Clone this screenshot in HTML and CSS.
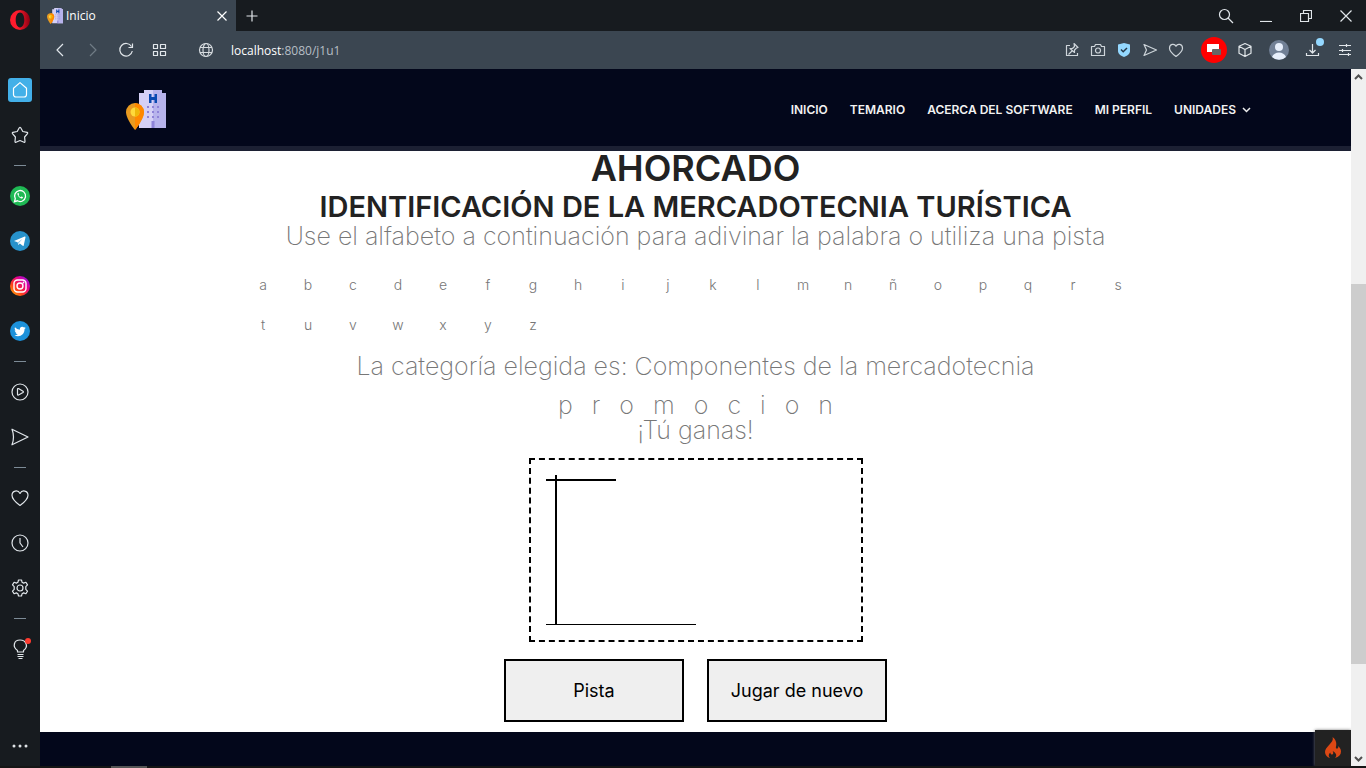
FILE: index.html
```html
<!DOCTYPE html>
<html lang="es">
<head>
<meta charset="utf-8">
<title>Inicio</title>
<link rel="stylesheet" href="styles.css">
</head>
<body>
<svg width="0" height="0" class="defs" aria-hidden="true">
  <defs>
    <linearGradient id="insta" x1="0" y1="1" x2="1" y2="0"><stop offset="0" stop-color="#ffc400"/><stop offset=".35" stop-color="#ff3c1c"/><stop offset=".65" stop-color="#e3008f"/><stop offset="1" stop-color="#7a1cff"/></linearGradient>
    <linearGradient id="opera" x1="0" x2="1"><stop offset=".4" stop-color="#ff1b2d"/><stop offset="1" stop-color="#8c0012"/></linearGradient>
    <symbol id="hotel" viewBox="0 0 40 40">
      <path d="M13 3h5V0h18v3h4v35H13z" fill="#d5d0f6"/>
      <path d="M27 0h9v3h4v35H27z" fill="#b7b3ec"/>
      <path d="M23 4h2.500v3h3V4H31v9h-2.500v-3h-3v3H23z" fill="#0a49b0"/>
      <path d="M21 16h2v2h-2zm5 0h2v2h-2zm5 0h2v2h-2zM21 21h2v2h-2zm5 0h2v2h-2zm5 0h2v2h-2zM21 26h2v2h-2zm5 0h2v2h-2zm5 0h2v2h-2zM25.500 31h3v7h-3z" fill="#8e83d8"/>
      <path d="M9 13a9 9 0 0 0-9 9c0 7 9 18 9 18s9-11 9-18a9 9 0 0 0-9-9z" fill="#e89a20"/>
      <path d="M9 13v27s9-11 9-18a9 9 0 0 0-9-9z" fill="#ff8800"/>
      <circle cx="9" cy="22" r="4.500" fill="#ffd93b"/><path d="M9 17.500a4.500 4.500 0 0 1 0 9z" fill="#efb80b"/>
    </symbol>
  </defs>
</svg>
<div class="window">
  <aside class="sidebar">
    <button class="side opera" aria-label="Opera"><svg width="20" height="20" viewBox="0 0 20 20"><path fill-rule="evenodd" fill="url(#opera)" d="M10 0a10 10 0 1 0 0 20 10 10 0 0 0 0-20zm0 2.600c2.700 0 4.300 3.400 4.300 7.400s-1.600 7.400-4.300 7.400S5.700 14 5.700 10 7.300 2.600 10 2.600z"/></svg></button>
    <button class="side home" aria-label="Página inicial"><svg width="24" height="24" viewBox="0 0 24 24"><path class="line" d="M5.500 10.200 12 4.600l6.500 5.600v6.300a2.500 2.500 0 0 1-2.500 2.500H8a2.500 2.500 0 0 1-2.500-2.500z"/></svg></button>
    <button class="side" aria-label="Marcadores"><svg width="20" height="20" viewBox="0 0 20 20"><path class="line" d="M9.300 2.800q.7-1.100 1.400 0l2.100 3.700 4.300.9q1 .3.400 1.200L14.600 12l.4 4.500q0 1.100-1 .7l-4-1.700-4 1.700q-1 .4-1-.7l.4-4.500-2.900-3.400q-.6-.9.400-1.200l4.300-.9z"/></svg></button>
    <hr class="rule">
    <button class="side" aria-label="WhatsApp"><svg width="20" height="20" viewBox="0 0 20 20"><circle cx="10" cy="10" r="10" fill="#1fb954"/><path d="M4.500 15.700l.8-3a5.500 5.500 0 1 1 2.100 2.100z" fill="none" stroke="#fff" stroke-width="1.300"/><path d="M8 6.800c-1.300.7-.3 2.900.9 4.100s3.400 2.300 4.100.9c.2-.6-1.300-1.400-1.600-1.200l-.6.7c-1-.3-1.800-1-2.300-2l.5-.7c.2-.4-.4-1.900-1-1.800z" fill="#fff"/></svg></button>
    <button class="side" aria-label="Telegram"><svg width="20" height="20" viewBox="0 0 20 20"><circle cx="10" cy="10" r="10" fill="#2792cb"/><path d="M4 10.100 14.700 5.600c.6-.2.900.1.800.7l-1.800 8.100c-.1.600-.6.700-1 .4L9.800 12.600 8.300 14 7.600 11.300z" fill="#fff"/><path d="m8 11.200 4.600-3.400-3.700 4.200-.6 2z" fill="#8dc8e8"/></svg></button>
    <button class="side" aria-label="Instagram"><svg width="20" height="20" viewBox="0 0 20 20"><circle cx="10" cy="10" r="10" fill="url(#insta)"/><rect x="4" y="4" width="12" height="12" rx="3.500" fill="none" stroke="#fff" stroke-width="1.400"/><circle cx="10" cy="10" r="3" fill="none" stroke="#fff" stroke-width="1.400"/><circle cx="13.500" cy="6.500" r=".9" fill="#fff"/></svg></button>
    <button class="side" aria-label="Twitter"><svg width="20" height="20" viewBox="0 0 20 20"><circle cx="10" cy="10" r="10" fill="#1c91da"/><path d="M15.800 6.700l-1.300.5 1-1.300-1.500.6a2.500 2.500 0 0 0-4.200 2.200A6.500 6.500 0 0 1 5 6.300c-.7 1.200-.3 2.500.7 3.200l-1-.3c0 1.200.8 2 1.900 2.400H5.500c.4 1 1.200 1.600 2.300 1.700-1 .8-2.200 1.100-3.500 1 5 2.600 10.400-.4 10.200-6z" fill="#fff"/></svg></button>
    <hr class="rule">
    <button class="side" aria-label="Reproductor"><svg width="20" height="20" viewBox="0 0 20 20"><circle class="line" cx="10" cy="10" r="8"/><path class="line" d="M7.500 7.200q0-1 1-.6l4.500 2.700q.8.600 0 1.200l-4.500 2.500q-1 .3-1-.7z"/></svg></button>
    <button class="side" aria-label="Mi Flow"><svg width="20" height="20" viewBox="0 0 20 20"><path class="line" d="M2 2.200 18 10 2 17.800q3-7.800 0-15.600z"/></svg></button>
    <hr class="rule">
    <button class="side" aria-label="Favoritos"><svg width="20" height="20" viewBox="0 0 20 20"><path class="line" d="M10 17.500C5 13.800 2 10.500 2 7.200 2 2.500 8 1.500 10 5.400 12 1.500 18 2.500 18 7.200c0 3.300-3 6.600-8 10.300z"/></svg></button>
    <button class="side" aria-label="Historial"><svg width="20" height="20" viewBox="0 0 20 20"><circle class="line" cx="10" cy="10" r="8"/><path class="line" d="M10 5v5l3 4"/></svg></button>
    <button class="side" aria-label="Configuración"><svg width="20" height="20" viewBox="0 0 20 20"><path class="line" d="M8.500 2h3l.6 2.300 1.500.8 2.300-.8 1.600 2.600-1.700 1.700v2.800l1.700 1.700-1.600 2.600-2.300-.8-1.500.8-.6 2.300h-3l-.6-2.300-1.500-.8-2.300.8-1.600-2.600 1.700-1.700V8.600L2.500 6.900l1.600-2.600 2.300.8 1.500-.8z"/><circle class="line" cx="10" cy="10" r="3"/></svg></button>
    <hr class="rule">
    <button class="side tips" aria-label="Sugerencias"><svg width="20" height="24" viewBox="0 0 20 24"><path class="line" d="M7.500 15v-1.500C2 9.500 4 3 10 3s9 6.500 3.500 10.500V15zM7.500 17.500h6M7.500 19.500h6M8.500 21.500h4"/><circle cx="18" cy="4" r="3" fill="#ff3b30"/></svg></button>
    <button class="side more" aria-label="Más"><svg width="20" height="20" viewBox="0 0 20 20" fill="#dfe3e6"><circle cx="4" cy="10" r="1.500"/><circle cx="10" cy="10" r="1.500"/><circle cx="16" cy="10" r="1.500"/></svg></button>
  </aside>

  <div class="browser">
    <div class="tabs">
      <div class="tab"><svg width="16" height="16"><use href="#hotel"/></svg><span class="tab-title">Inicio</span><button aria-label="Cerrar pestaña"><svg width="12" height="12" viewBox="0 0 12 12"><path class="line" d="m1.500 1.500 9 9m0-9-9 9"/></svg></button></div>
      <button class="new-tab" aria-label="Nueva pestaña"><svg width="12" height="12" viewBox="0 0 12 12"><path class="line" d="M6 .5v11M.5 6h11"/></svg></button>
      <div class="controls">
        <button aria-label="Buscar"><svg width="16" height="16" viewBox="0 0 16 16"><circle class="line" cx="6.500" cy="6.500" r="5"/><path class="line" d="m10 10 5 5"/></svg></button>
        <button aria-label="Minimizar"><svg width="12" height="12" viewBox="0 0 12 12"><path class="line" d="M0 11.500h12"/></svg></button>
        <button aria-label="Restaurar"><svg width="12" height="12" viewBox="0 0 12 12"><path class="line" d="M.5 3.500h8v8h-8zM3.500 3.500v-3h8v8h-3"/></svg></button>
        <button aria-label="Cerrar"><svg width="12" height="12" viewBox="0 0 12 12"><path class="line" d="m.5.5 11 11m0-11-11 11"/></svg></button>
      </div>
    </div>
    <div class="toolbar">
      <div class="history">
        <button aria-label="Atrás"><svg width="16" height="16" viewBox="0 0 16 16"><path class="line" d="M11 2 5 8l6 6"/></svg></button>
        <button class="dim" aria-label="Adelante"><svg width="16" height="16" viewBox="0 0 16 16"><path class="line" d="m5 2 6 6-6 6"/></svg></button>
        <button aria-label="Recargar"><svg width="16" height="16" viewBox="0 0 16 16"><path class="line" d="M13.500 4.500A6.300 6.300 0 1 0 14.300 9M14.500 1.500v4h-4"/></svg></button>
        <button aria-label="Speed Dial"><svg width="16" height="16" viewBox="0 0 16 16"><path class="line" d="M2.500 2.500h4v4h-4zM9.500 2.500h5v4h-5zM2.500 9.500h4v4h-4zM9.500 9.500h5v4h-5z"/></svg></button>
      </div>
      <button class="address"><svg width="16" height="16" viewBox="0 0 16 16"><circle class="line" cx="8" cy="8" r="6.500"/><ellipse class="line" cx="8" cy="8" rx="3" ry="6.500"/><path class="line" d="M2 5.500h12M2 10.500h12"/></svg><span>localhost<span class="path">:8080/j1u1</span></span></button>
      <div class="actions">
        <button aria-label="Fijar"><svg width="16" height="16" viewBox="0 0 16 16"><path class="line" d="M6 3.500H2.500v10h11V11M10 1.500l4 4-1.500.5-2 2v2.500L6 6.500h2.500l2-2zM8 9l-3.500 3.500"/></svg></button>
        <button aria-label="Captura"><svg width="16" height="16" viewBox="0 0 16 16"><path class="line" d="M1.500 4.500h3l1-2h5l1 2h3v9h-13z"/><circle class="line" cx="8" cy="8.500" r="2.500"/></svg></button>
        <button aria-label="Protección"><svg width="16" height="16" viewBox="0 0 16 16"><path d="m8 1 6 1.500V9c0 3-3 5-6 6-3-1-6-3-6-6V2.500z" fill="#94d8ff"/><path d="m5 7.500 2.200 2.200L11 6" fill="none" stroke="#25394a" stroke-width="1.500"/></svg></button>
        <button aria-label="Enviar"><svg width="16" height="16" viewBox="0 0 16 16"><path class="line" d="M2 2.500 14.500 8 2 13.500 4.500 8z"/></svg></button>
        <button aria-label="Me gusta"><svg width="16" height="16" viewBox="0 0 16 16"><path class="line" d="M8 14.500C4 11.500 1.500 9 1.500 6.200 1.500 2 6.500 1 8 4.300 9.500 1 14.500 2 14.500 6.200 14.500 9 12 11.500 8 14.500z"/></svg></button>
      </div>
      <div class="extensions">
        <button aria-label="Ventana emergente"><svg width="26" height="26" viewBox="0 0 26 26"><circle cx="13" cy="13" r="13" fill="#ff0000"/><path d="M6 7h12v8H6z" fill="#fff"/><rect x="11" y="12" width="9" height="6" rx="1" fill="#666"/></svg></button>
        <button aria-label="Extensiones"><svg width="16" height="16" viewBox="0 0 16 16"><path class="line" d="m8 1.500 6 2.700v7L8 14.500l-6-3.300v-7zM2 4.200 8 7.500l6-3.300M8 7.500v7"/></svg></button>
        <button aria-label="Perfil"><svg width="20" height="20" viewBox="0 0 20 20"><circle cx="10" cy="10" r="10" fill="#718096"/><circle cx="10" cy="7" r="4" fill="#e6eefb"/><path d="M3 17c2-6 12-6 14 0a10 10 0 0 1-14 0z" fill="#e6eefb"/></svg></button>
        <button aria-label="Descargas" class="download"><svg width="16" height="16" viewBox="0 0 16 16"><path class="line" d="M1.500 11v2.500h12V11M7.500 2v9M4.500 8l3 3 3-3"/></svg><i class="badge"></i></button>
        <button aria-label="Menú"><svg width="16" height="16" viewBox="0 0 16 16"><path class="line" d="M2 3.500h12M2 8.500h12M2 12.500h12M9.500 2v3M5.500 7v3M11.500 11v3"/></svg></button>
      </div>
    </div>

    <div class="viewport">
      <div class="page">
        <header class="site-header">
          <a href="#" aria-label="Inicio"><svg width="40" height="40"><use href="#hotel"/></svg></a>
          <nav class="nav">
            <a href="#">INICIO</a><a href="#">TEMARIO</a><a href="#">ACERCA DEL SOFTWARE</a><a href="#">MI PERFIL</a>
            <a href="#">UNIDADES <svg width="9" height="6" viewBox="0 0 9 6"><path d="m1 1 3.500 3.500L8 1" fill="none" stroke="#eee" stroke-width="1.500"/></svg></a>
          </nav>
        </header>
        <main class="game">
          <h1>AHORCADO</h1>
          <h2>IDENTIFICACIÓN DE LA MERCADOTECNIA TURÍSTICA</h2>
          <p class="lead">Use el alfabeto a continuación para adivinar la palabra o utiliza una pista</p>
          <div class="alphabet">
            <button>a</button><button>b</button><button>c</button><button>d</button><button>e</button><button>f</button><button>g</button><button>h</button><button>i</button><button>j</button><button>k</button><button>l</button><button>m</button><button>n</button><button>ñ</button><button>o</button><button>p</button><button>q</button><button>r</button><button>s</button><button>t</button><button>u</button><button>v</button><button>w</button><button>x</button><button>y</button><button>z</button>
          </div>
          <p class="lead category">La categoría elegida es: Componentes de la mercadotecnia</p>
          <div class="word"><span>p</span><span>r</span><span>o</span><span>m</span><span>o</span><span>c</span><span>i</span><span>o</span><span>n</span></div>
          <p class="lead">¡Tú ganas!</p>
          <div class="gallows"><svg width="300" height="150" viewBox="0 0 300 150"><path d="M0 4h70v2H0zM9 0h2v150H9zM0 149h150v1H0z"/></svg></div>
          <div class="choices"><button>Pista</button><button>Jugar de nuevo</button></div>
        </main>
        <footer class="site-footer"><button aria-label="Depuración"><svg width="18" height="22" viewBox="0 0 18 22"><path fill="#dd4814" d="M8.500 0c1 3-.5 4.800-3 7.500C2.500 10.700 1 12.500 1 15c0 3 2 5.300 5 6-2-2-1.500-4 .3-5.600.2 1.400.8 2 1.700 2 1.500 0 1.600-1.400.7-3.400 3.300 1.800 4.800 4.700 2.300 7 4-1 6-3.300 6-6.500 0-2.500-1.300-4-2.700-5.500.2 1.500-.2 2.600-1.300 2.600-1.500 0-1.200-1.500-.8-3.200C12.800 5 11 1.500 8.500 0z"/></svg></button></footer>
      </div>
      <div class="scrollbar"><svg width="15" height="15" viewBox="0 0 15 15"><path d="m4 10 3.500-3.500L11 10" fill="none" stroke="#505050" stroke-width="2"/></svg><div class="track"><div class="thumb"></div></div><svg width="15" height="15" viewBox="0 0 15 15"><path d="m4 6 3.500 3.500L11 6" fill="none" stroke="#505050" stroke-width="2"/></svg></div>
    </div>
  </div>
  <div class="taskbar"></div>
</div>
</body>
</html>
```
FILE: styles.css
```css
* { box-sizing: border-box; }
body, h1, h2, p { margin: 0; }
body { overflow: hidden; font-family: Inter, "Open Sans", sans-serif; }
button { border: 0; padding: 0; background: none; color: inherit; font: inherit; }
a { color: inherit; text-decoration: none; }
svg { display: block; }
.defs { position: absolute; }
.line { fill: none; stroke: currentColor; stroke-width: 1.2; stroke-linejoin: round; }

.window { display: grid; grid-template: 1fr 2px / 40px 1fr; height: 100vh; background: #171b1f; color: #e1e6ea; }

.sidebar { display: flex; flex-direction: column; align-items: center; padding-bottom: 8px; }
.side { display: grid; place-items: center; flex: none; width: 40px; height: 45px; }
.opera { height: 40px; margin-bottom: 27px; }
.home svg { border-radius: 3px; background: #43b0e8; color: #fff; }
.rule { flex: none; width: 12px; height: 1px; margin: 8px 0 7px; border: 0; background: #7d8b96; }
.tips svg { overflow: visible; }
.more { height: 24px; margin-top: auto; }

.browser { display: flex; flex-direction: column; min-width: 0; min-height: 0; font-family: "Open Sans", sans-serif; font-size: 12px; }
.tabs { display: flex; align-items: center; flex: none; height: 31px; }
.tab { display: flex; align-items: center; gap: 3px; width: 196px; height: 31px; padding: 0 8px 0 7px; background: #3b4651; color: #fff; }
.tab-title { flex: 1; }
.new-tab { margin-left: 10px; }
.controls { display: flex; align-items: center; gap: 28px; margin-left: auto; padding-right: 14px; }
.controls button:first-child { margin-right: -2px; }
.toolbar { display: flex; align-items: center; flex: none; height: 38px; padding: 0 13px 0 12px; background: #3b4651; }
.history { display: flex; gap: 17px; }
.dim { color: #707b85; }
.address { display: flex; align-items: center; flex: 1; gap: 17px; margin-left: 31px; color: #fff; font-size: 12px; }
.address svg { color: #d5dade; }
.path { color: #b6bec5; }
.actions { display: flex; gap: 10px; color: #ced5da; }
.extensions { display: flex; align-items: center; gap: 16px; margin-left: 17px; }
.extensions button:first-child { margin-right: -6px; }
.download { position: relative; }
.badge { position: absolute; top: -4px; right: -3px; width: 8px; height: 8px; border-radius: 50%; background: #94d8ff; }

.viewport { display: flex; flex: 1; min-height: 0; font-family: Inter, sans-serif; }
.page { display: flex; flex-direction: column; flex: 1; min-width: 0; background: #fff; color: #777; }
.site-header { display: flex; align-items: center; justify-content: space-between; flex: none; height: 82px; padding: 4px 100px 0 86px; border-bottom: 5px solid #1c2033; background: #03071b; color: #f2f2f2; }
.nav { display: flex; gap: 22px; font-size: 12px; font-weight: 600; }
.nav a { display: flex; align-items: center; gap: 6px; }

.game { display: flex; flex-direction: column; align-items: center; flex: 1; padding-bottom: 10px; text-align: center; }
h1, h2 { color: #222; font-weight: 600; }
h1 { font-size: 36px; line-height: 34px; }
h2 { margin-top: 5px; font-size: 29px; line-height: 34px; }
.lead, .word { font-size: 25px; font-weight: 200; line-height: 25px; }
.alphabet { display: grid; grid-template-columns: repeat(20, 45px); grid-auto-rows: 40px; width: 910px; margin: 15px 0 10px; font-size: 14px; font-weight: 300; }
.alphabet button:nth-child(19) { grid-column: 19; }
.category { margin-bottom: 14px; }
.word { display: flex; gap: 19px; }
.gallows { margin: 15px 0 17px; padding: 15px; border: 2px dashed #000; color: #000; }
.choices { display: flex; gap: 23px; color: #000; font-size: 18px; }
.choices button { width: 180px; height: 63px; border: 2px solid #000; background: #efefef; }
.site-footer { display: flex; justify-content: flex-end; flex: none; height: 34px; background: #03071b; }
.site-footer button { display: grid; place-items: center; align-self: flex-end; flex: none; width: 36px; height: 36px; background: #222; box-shadow: 0 0 3px #777; }

.scrollbar { display: flex; flex-direction: column; width: 15px; background: #f0f0f0; }
.track { flex: 1; padding-top: 200px; }
.thumb { height: 57%; min-height: 380px; background: #cdcdcd; }
.taskbar { grid-column: 1 / -1; background: linear-gradient(90deg, #151515 111px, #555 111px 147px, #151515 147px); }
```
